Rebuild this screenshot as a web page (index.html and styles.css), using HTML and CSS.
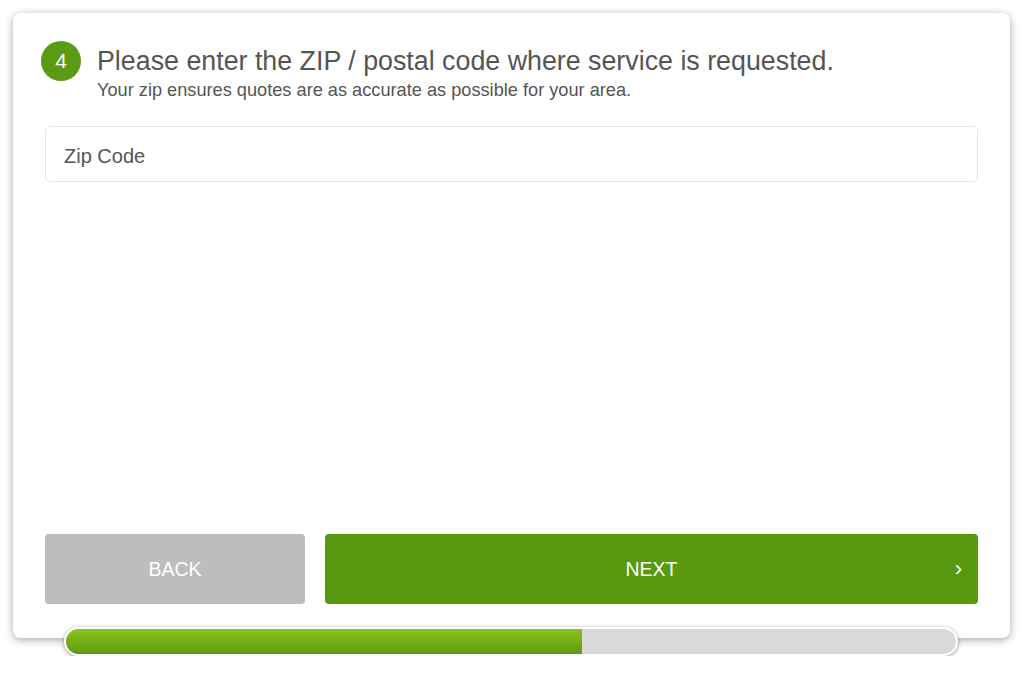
FILE: index.html
```html
<!DOCTYPE html>
<html lang="en">
<head>
    <meta charset="utf-8" />
    <title>Service request</title>
    <meta name="viewport" content="width=device-width, initial-scale=1.0">
    <link rel="stylesheet" href="styles.css">
</head>
<body>

<div class="form-wrap">
    <div class="card">
        <div class="step-header">
            <div class="step-number">4</div>
            <div class="step-text">
                <h1>Please enter the ZIP / postal code where service is requested.</h1>
                <p>Your zip ensures quotes are as accurate as possible for your area.</p>
            </div>
        </div>

        <input class="zip-input" type="text" placeholder="Zip Code">

        <div class="actions">
            <button class="btn btn-back">BACK</button>
            <button class="btn btn-next">NEXT<span class="chevron">&rsaquo;</span></button>
        </div>
    </div>

    <div class="progress">
        <div class="progress-fill" style="width: 58%"></div>
    </div>
</div>

</body>
</html>
```

FILE: styles.css
```css
* {
    margin: 0;
    padding: 0;
    box-sizing: border-box;
}

body {
    font-family: "Liberation Sans", Arial, sans-serif;
    background-color: #fff;
    color: #555;
    padding: 13px 14px 0 13px;
}

.form-wrap {
    width: 997px;
}

.card {
    height: 625px;
    background: #fff;
    border-radius: 8px;
    box-shadow: 0 2px 8px rgba(0, 0, 0, 0.35);
    padding: 28px 32px 34px 32px;
    display: flex;
    flex-direction: column;
}

.step-header {
    display: flex;
    align-items: flex-start;
    margin-left: -4px;
}

.step-number {
    width: 40px;
    height: 40px;
    border-radius: 50%;
    background-color: #5a9a14;
    color: #fff;
    font-size: 21px;
    line-height: 40px;
    text-align: center;
    flex-shrink: 0;
}

.step-text {
    margin-left: 16px;
    padding-top: 5px;
}

.step-text h1 {
    font-size: 26.8px;
    font-weight: normal;
    line-height: 30px;
    color: #555;
}

.step-text p {
    font-size: 18.2px;
    line-height: 22px;
    color: #555;
    margin-top: 3px;
}

.zip-input {
    margin-top: 25px;
    height: 56px;
    width: 100%;
    border: 1px solid #e6e6e6;
    border-radius: 5px;
    padding: 5px 18px 0 18px;
    font-family: "Liberation Sans", Arial, sans-serif;
    font-size: 20px;
    color: #555;
    outline: none;
}

.zip-input::placeholder {
    color: #555;
}

.actions {
    margin-top: auto;
    display: flex;
    gap: 20px;
}

.btn {
    height: 70px;
    border: none;
    border-radius: 4px;
    color: #fff;
    font-family: "Liberation Sans", Arial, sans-serif;
    font-size: 19.5px;
    cursor: pointer;
}

.btn-back {
    width: 260px;
    background-color: #bdbdbd;
}

.btn-next {
    flex: 1;
    background-color: #589a0f;
    position: relative;
}

.chevron {
    position: absolute;
    right: 16px;
    top: 50%;
    transform: translateY(-50%);
    font-size: 22px;
}

.progress {
    position: relative;
    margin: -11px 52px 0 51px;
    height: 29px;
    background-color: #d9d9d9;
    border: 2px solid #fff;
    border-radius: 15px;
    overflow: hidden;
    box-shadow: 0 1px 4px rgba(0, 0, 0, 0.4);
}

.progress-fill {
    height: 100%;
    background: linear-gradient(to bottom, #8cc41e, #5a9a10);
}
```
